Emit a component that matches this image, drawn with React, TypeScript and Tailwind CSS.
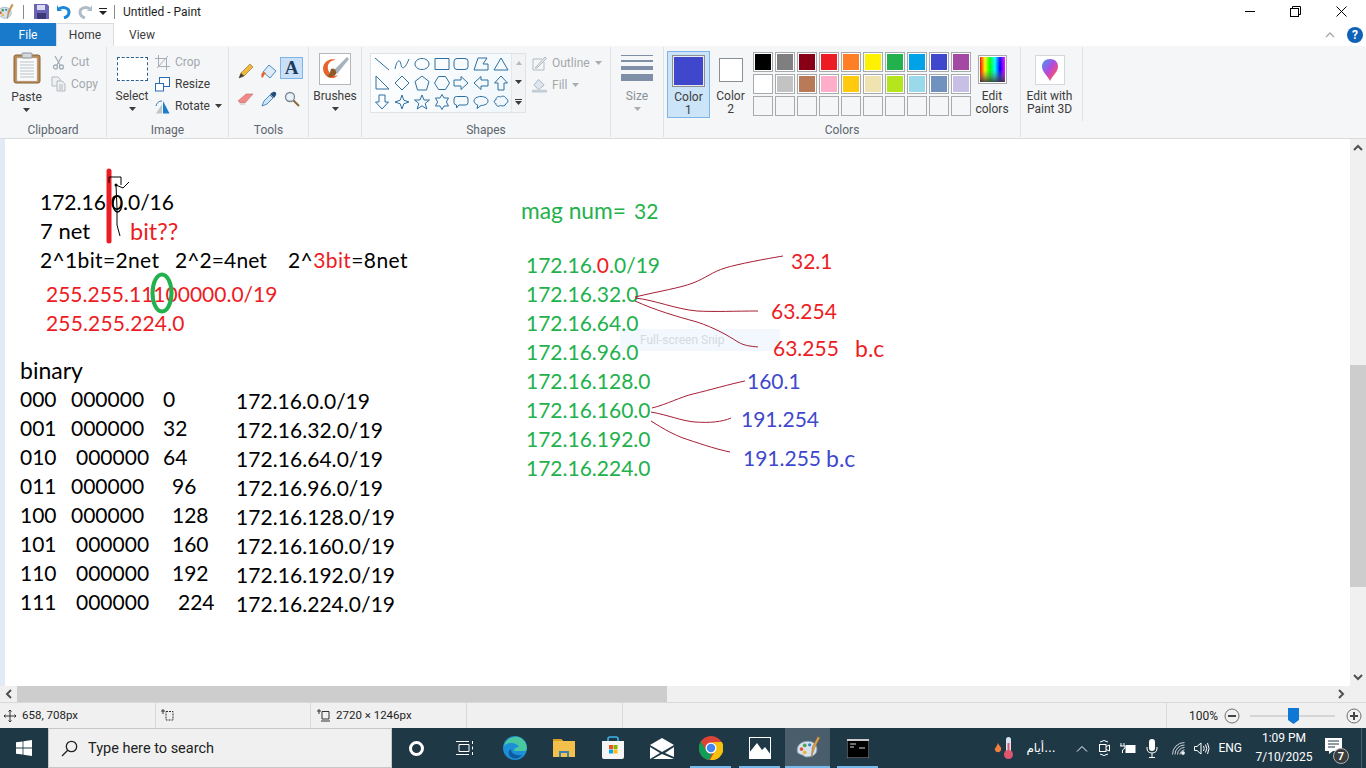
import React from 'react';

const RED = 'text-[#ed1c24]';
const GREEN = 'text-[#22b14c]';
const BLUE = 'text-[#3f48cc]';

// --- text typed on the paint canvas (page x - 5, page y - 139) ---
const canvasText: { cls: string; text: React.ReactNode }[] = [
  { cls: 'left-[35px] top-[49px]', text: '172.16.0.0/16' },
  { cls: 'left-[35px] top-[78px] text-[22px]', text: '7 net' },
  { cls: `left-[125px] top-[78px] text-[23.500px] ${RED}`, text: 'bit??' },
  { cls: 'left-[35px] top-[107px] tracking-[0.35px]', text: '2^1bit=2net' },
  { cls: 'left-[170px] top-[107px] tracking-[0.1px]', text: '2^2=4net' },
  { cls: 'left-[283px] top-[107px] tracking-[0.4px]', text: <>2^<span className={RED}>3bit</span>=8net</> },
  { cls: `left-[41px] top-[141px] ${RED}`, text: '255.255.11100000.0/19' },
  { cls: `left-[41px] top-[170px] tracking-[0.15px] ${RED}`, text: '255.255.224.0' },
  { cls: 'left-[15px] top-[217px] text-[23px]', text: 'binary' },

  { cls: 'left-[15px] top-[246px]', text: '000' },
  { cls: 'left-[66px] top-[246px]', text: '000000' },
  { cls: 'left-[158px] top-[246px]', text: '0' },
  { cls: 'left-[15px] top-[275px]', text: '001' },
  { cls: 'left-[66px] top-[275px]', text: '000000' },
  { cls: 'left-[158px] top-[275px]', text: '32' },
  { cls: 'left-[15px] top-[304px]', text: '010' },
  { cls: 'left-[71px] top-[304px]', text: '000000' },
  { cls: 'left-[158px] top-[304px]', text: '64' },
  { cls: 'left-[15px] top-[333px]', text: '011' },
  { cls: 'left-[66px] top-[333px]', text: '000000' },
  { cls: 'left-[167px] top-[333px]', text: '96' },
  { cls: 'left-[15px] top-[362px]', text: '100' },
  { cls: 'left-[66px] top-[362px]', text: '000000' },
  { cls: 'left-[167px] top-[362px]', text: '128' },
  { cls: 'left-[15px] top-[391px]', text: '101' },
  { cls: 'left-[71px] top-[391px]', text: '000000' },
  { cls: 'left-[167px] top-[391px]', text: '160' },
  { cls: 'left-[15px] top-[420px]', text: '110' },
  { cls: 'left-[71px] top-[420px]', text: '000000' },
  { cls: 'left-[167px] top-[420px]', text: '192' },
  { cls: 'left-[15px] top-[449px]', text: '111' },
  { cls: 'left-[71px] top-[449px]', text: '000000' },
  { cls: 'left-[173px] top-[449px]', text: '224' },

  { cls: 'left-[231px] top-[248px]', text: '172.16.0.0/19' },
  { cls: 'left-[231px] top-[277px] tracking-[0.05px]', text: '172.16.32.0/19' },
  { cls: 'left-[231px] top-[306px] tracking-[0.05px]', text: '172.16.64.0/19' },
  { cls: 'left-[231px] top-[335px] tracking-[0.05px]', text: '172.16.96.0/19' },
  { cls: 'left-[231px] top-[364px] tracking-[0.05px]', text: '172.16.128.0/19' },
  { cls: 'left-[231px] top-[393px] tracking-[0.05px]', text: '172.16.160.0/19' },
  { cls: 'left-[231px] top-[422px] tracking-[0.05px]', text: '172.16.192.0/19' },
  { cls: 'left-[231px] top-[451px] tracking-[0.05px]', text: '172.16.224.0/19' },

  { cls: `left-[516px] top-[58px] text-[22.750px] ${GREEN}`, text: 'mag num=' },
  { cls: `left-[629px] top-[58px] ${GREEN}`, text: '32' },
  { cls: `left-[521px] top-[112px] ${GREEN}`, text: <>172.16.<span className={RED}>0</span>.0/19</> },
  { cls: `left-[521px] top-[141px] ${GREEN}`, text: '172.16.32.0' },
  { cls: `left-[521px] top-[170px] ${GREEN}`, text: '172.16.64.0' },
  { cls: `left-[521px] top-[199px] ${GREEN}`, text: '172.16.96.0' },
  { cls: `left-[521px] top-[228px] ${GREEN}`, text: '172.16.128.0' },
  { cls: `left-[521px] top-[257px] ${GREEN}`, text: '172.16.160.0' },
  { cls: `left-[521px] top-[286px] ${GREEN}`, text: '172.16.192.0' },
  { cls: `left-[521px] top-[315px] ${GREEN}`, text: '172.16.224.0' },

  { cls: `left-[786px] top-[108px] ${RED}`, text: '32.1' },
  { cls: `left-[766px] top-[158px] ${RED}`, text: '63.254' },
  { cls: `left-[768px] top-[195px] ${RED}`, text: '63.255' },
  { cls: `left-[850px] top-[195px] text-[23px] ${RED}`, text: 'b.c' },
  { cls: `left-[742px] top-[228px] ${BLUE}`, text: '160.1' },
  { cls: `left-[736px] top-[266px] ${BLUE}`, text: '191.254' },
  { cls: `left-[738px] top-[305px] ${BLUE}`, text: '191.255' },
  { cls: `left-[821px] top-[305px] text-[23px] ${BLUE}`, text: 'b.c' },
];

const swatchRow1 = ['bg-[#000000]', 'bg-[#7f7f7f]', 'bg-[#880015]', 'bg-[#ed1c24]', 'bg-[#ff7f27]', 'bg-[#fff200]', 'bg-[#22b14c]', 'bg-[#00a2e8]', 'bg-[#3f48cc]', 'bg-[#a349a4]'];
const swatchRow2 = ['bg-[#ffffff]', 'bg-[#c3c3c3]', 'bg-[#b97a57]', 'bg-[#ffaec9]', 'bg-[#ffc90e]', 'bg-[#efe4b0]', 'bg-[#b5e61d]', 'bg-[#99d9ea]', 'bg-[#7092be]', 'bg-[#c8bfe7]'];
const swatchRow3 = Array.from({ length: 10 }, () => 'bg-[#f5f6f7]');

const shapePaths = [
  'M1 2L15 14',
  'M1 13C3 3 6 3 7 8.5S11 13 15 3',
  'M8 2.5C12 2.5 15 5 15 8s-3 5.5-7 5.5S1 11 1 8s3-5.5 7-5.5Z',
  'M1 2.5H15V13.5H1Z',
  'M4 2.5H12Q15 2.5 15 5.5V10.5Q15 13.5 12 13.5H4Q1 13.5 1 10.5V5.5Q1 2.5 4 2.5Z',
  'M1 14L5 2H14L10 8H15V14Z',
  'M8 2L15 14H1Z',
  'M2 1L15 14H2Z',
  'M8 1L15 8L8 15L1 8Z',
  'M8 1L15 6.5L12.5 15H3.5L1 6.5Z',
  'M4.5 1.5H11.5L15.5 8L11.5 14.5H4.5L.5 8Z',
  'M1 5H8V1.5L15 8L8 14.5V11H1Z',
  'M15 5H8V1.5L1 8L8 14.5V11H15Z',
  'M8 1L14.5 8H11V15H5V8H1.5Z',
  'M8 15L14.5 8H11V1H5V8H1.5Z',
  'M8 1L9.8 6.2L15 8L9.8 9.8L8 15L6.2 9.8L1 8L6.2 6.2Z',
  'M8 1L10 6H15.5L11.2 9.4L12.8 15L8 11.8L3.2 15L4.8 9.4L.5 6H6Z',
  'M8 .5L10 4H14.5L12.4 8L14.5 12H10L8 15.5L6 12H1.5L3.6 8L1.5 4H6Z',
  'M3.5 2.5H12.5Q15 2.5 15 5V8.5Q15 11 12.5 11H6L3.5 14V11Q1 11 1 8.5V5Q1 2.5 3.5 2.5Z',
  'M8 2.5C12 2.5 15 4.5 15 7s-3 4.5-7 4.5L4 14.5L4.8 11C2.5 10.300 1 8.800 1 7C1 4.500 4 2.500 8 2.500Z',
  'M3 6C2.500 3.500 5.500 1.500 7.500 3C9 1.500 12.500 2 13 4.500C15.500 5 15.500 9 13 9.500C12.500 12 9 12.500 7.500 11.500C5.500 13 2.500 12 3 9.500C.5 9 .5 6 3 6Z',
];

const Caret = ({ light }: { light?: boolean }) => (
  <svg width="7" height="4" viewBox="0 0 7 4" className="shrink-0">
    <path d="M0 0H7L3.500 4Z" fill={light ? '#a9adb2' : '#3c3c3c'} />
  </svg>
);

const PaletteIcon = ({ size }: { size: number }) => (
  <svg width={size} height={size} viewBox="0 0 24 24">
    <path d="M2 14C2 8 8 5 14 6C19 7 21 11 20 15C19 19 14 21 9 20C7 17 2 19 2 14Z" fill="#d6e3ef" stroke="#7f9bb5" strokeWidth=".8" />
    <circle cx="6" cy="13" r="1.700" fill="#e2563c" />
    <circle cx="9" cy="9.500" r="1.700" fill="#4ca64c" />
    <circle cx="13.500" cy="9" r="1.500" fill="#3f7fd0" />
    <circle cx="9" cy="16" r="1.700" fill="#e5b73b" />
    <path d="M15 21L16 11L21 1.500L23 2.500L18 12Z" fill="#d9a04f" stroke="#9a6a2a" strokeWidth=".5" />
  </svg>
);

const GroupLabel = ({ children }: { children: React.ReactNode }) => (
  <div className="h-[18px] pt-[1px] text-center text-[12px] leading-[16px] text-[#5c6670]">{children}</div>
);

const SmallAction = ({ icon, label, muted, caret }: { icon: React.ReactNode; label: string; muted?: boolean; caret?: boolean }) => (
  <div className={`flex h-[22px] items-center gap-[5px] text-[12px] ${muted ? 'text-[#a4a8ad]' : 'text-[#3c3c3c]'}`}>
    <span className="flex w-[15px] justify-center">{icon}</span>
    <span>{label}</span>
    {caret && <Caret light={muted} />}
  </div>
);

const RibbonGroup = ({ w, label, children }: { w: string; label: string; children: React.ReactNode }) => (
  <div className={`flex h-full shrink-0 flex-col border-r border-[#dfe1e3] ${w}`}>
    <div className="h-[74px] shrink-0">{children}</div>
    <GroupLabel>{label}</GroupLabel>
  </div>
);

const Ribbon = () => (
  <div className="flex h-[93px] shrink-0 border-b border-[#dadbdc] bg-[#f5f6f7] pb-[1px] pt-[1px]">
    <RibbonGroup w="w-[107px]" label="Clipboard">
      <div className="flex pl-[8px] pt-[5px]">
        <div className="flex w-[37px] flex-col items-center">
          <svg width="28" height="32" viewBox="0 0 28 32">
            <rect x="1" y="3" width="26" height="28" rx="2" fill="#b98a56" stroke="#8a6236" />
            <rect x="4" y="6" width="20" height="23" fill="#fafafa" stroke="#c9c9c9" strokeWidth=".5" />
            <path d="M7 10H21M7 13H21M7 16H21M7 19H21M7 22H21M7 25H21" stroke="#b9c3cc" />
            <rect x="9" y="1" width="10" height="5" rx="1" fill="#d4d8dc" stroke="#8d9298" />
          </svg>
          <span className="mt-[5px] text-[12px] leading-[16px] text-[#3c3c3c]">Paste</span>
          <span className="mt-[3px]"><Caret /></span>
        </div>
        <div className="ml-[6px] mt-[-1px]">
          <SmallAction muted label="Cut" icon={
            <svg width="13" height="15" viewBox="0 0 13 15" fill="none" stroke="#a3adb8" strokeWidth="1.300"><path d="M3 1L8 10M10 1L5 10" /><circle cx="3.500" cy="12" r="2" /><circle cx="9.500" cy="12" r="2" /></svg>
          } />
          <SmallAction muted label="Copy" icon={
            <svg width="15" height="16" viewBox="0 0 15 16" fill="#eef0f2" stroke="#b3bac1"><path d="M1 1H7L9 3V10H1Z" /><path d="M6 5H11L14 8V15H6Z" /><path d="M8 9H12M8 11H12M8 13H12" /></svg>
          } />
        </div>
      </div>
    </RibbonGroup>
    <RibbonGroup w="w-[122px]" label="Image">
      <div className="flex pl-[9px] pt-[10px]">
        <div className="flex w-[32px] flex-col items-center">
          <div className="h-[24px] w-[31px] border border-dashed border-[#2b5f8f] bg-white" />
          <span className="mt-[7px] text-[12px] leading-[16px] text-[#3c3c3c]">Select</span>
          <span className="mt-[3px]"><Caret /></span>
        </div>
        <div className="ml-[7px] mt-[-6px]">
          <SmallAction muted label="Crop" icon={
            <svg width="15" height="15" viewBox="0 0 15 15" fill="none" stroke="#a3adb8"><path d="M3.500 0V11.500H15M0 3.500H11.500V15M13 1L2 13" /></svg>
          } />
          <SmallAction label="Resize" icon={
            <svg width="15" height="15" viewBox="0 0 15 15" fill="#fff" stroke="#2b6cb0"><rect x="4.500" y=".5" width="10" height="9" /><rect x=".5" y="6.500" width="8" height="7.500" /></svg>
          } />
          <SmallAction label="Rotate" caret icon={
            <svg width="15" height="15" viewBox="0 0 15 15"><path d="M8 2L14.500 14.500H8Z" fill="#1c7ecb" /><path d="M7 5V14.500H1Z" fill="#c2c6ca" /><path d="M1 7C2 3 5 2 7 2" fill="none" stroke="#2b6cb0" /></svg>
          } />
        </div>
      </div>
    </RibbonGroup>
    <RibbonGroup w="w-[80px]" label="Tools">
      <div className="grid grid-cols-[23px_23px_23px] grid-rows-[28px_28px] justify-center pt-[10px]">
        <span className="flex items-center justify-center">
          <svg width="16" height="16" viewBox="0 0 16 16"><path d="M1 15L3 10L12 1L15 4L6 13Z" fill="#f0b73c" stroke="#8a6a2a" strokeWidth=".6" /><path d="M1 15L3 10L6 13Z" fill="#3c3c3c" /></svg>
        </span>
        <span className="flex items-center justify-center">
          <svg width="18" height="17" viewBox="0 0 18 17"><path d="M9 2L16 8L10 15L3 9Z" fill="#dcebf7" stroke="#4b8cc0" /><path d="M4 9C1 9 1 13 2 15C4 14 4 11 6 10Z" fill="#e8622c" /></svg>
        </span>
        <span className="flex h-[22px] items-center justify-center border border-[#7eb4ea] bg-[#c9e0f7] font-['Liberation_Serif',serif] text-[19px] font-bold text-[#1e3a5f]">A</span>
        <span className="flex items-center justify-center">
          <svg width="17" height="15" viewBox="0 0 17 15"><path d="M1 9L9 2H16L8 11H3Z" fill="#f08a8a" stroke="#c66" strokeWidth=".6" /><path d="M1 9L3 13H8V11H3Z" fill="#d9d9d9" /></svg>
        </span>
        <span className="flex items-center justify-center">
          <svg width="16" height="16" viewBox="0 0 16 16"><path d="M1 15L3 10L9 4L12 7L6 13Z" fill="#cfe6f7" stroke="#2b6cb0" strokeWidth=".8" /><path d="M9 3L12 1C14 0 16 2 15 4L13 7Z" fill="#1f4f7a" /></svg>
        </span>
        <span className="flex items-center justify-center">
          <svg width="16" height="16" viewBox="0 0 16 16" fill="none"><circle cx="6" cy="6" r="4.500" fill="#e8f1f8" stroke="#7a8794" strokeWidth="1.300" /><path d="M9.500 9.500L15 15" stroke="#8a6a3c" strokeWidth="2" /></svg>
        </span>
      </div>
    </RibbonGroup>
    <RibbonGroup w="w-[53px]" label="">
      <div className="flex flex-col items-center pt-[6px]">
        <div className="h-[32px] w-[32px] border border-[#b4b8bc] bg-white">
          <svg width="30" height="30" viewBox="0 0 30 30"><path d="M3 14C4 6 12 4 16 6C10 6 7 10 8 15C9 20 14 23 18 21C14 27 3 24 3 14Z" fill="#e8622c" /><path d="M13 17L27 3L29 5L17 20Z" fill="#a8b2bc" /><path d="M11 15C14 13 17 17 16 20C14 23 9 24 7 22C10 21 10 18 11 15Z" fill="#8d5a2b" /></svg>
        </div>
        <span className="mt-[3px] text-[12px] leading-[16px] text-[#3c3c3c]">Brushes</span>
        <span className="mt-[3px]"><Caret /></span>
      </div>
    </RibbonGroup>
    <RibbonGroup w="w-[249px]" label="Shapes">
      <div className="flex pl-[8px] pt-[6px]">
        <div className="flex h-[60px] w-[156px] border border-[#dfe3e8] bg-[linear-gradient(135deg,#ffffff,#eef6fb)]">
          <div className="grid h-full w-[141px] grid-cols-7 grid-rows-3 pl-[1px]">
            {shapePaths.map((d, i) => (
              <span key={i} className="flex items-center justify-center">
                <svg width="16" height="16" viewBox="0 0 16 16" fill="none" stroke="#2f6f9f" strokeWidth="1"><path d={d} /></svg>
              </span>
            ))}
          </div>
          <div className="flex w-[14px] flex-col items-center justify-around border-l border-[#e4e6e9] bg-[#f2f3f4]">
            <svg width="6" height="4" viewBox="0 0 6 4"><path d="M0 4H6L3 0Z" fill="#b5b8bb" /></svg>
            <Caret />
            <svg width="7" height="6" viewBox="0 0 7 6"><path d="M0 0H7V1H0ZM0 2H7L3.500 6Z" fill="#3c3c3c" /></svg>
          </div>
        </div>
        <div className="ml-[6px] mt-[-1px]">
          <SmallAction muted caret label="Outline" icon={
            <svg width="15" height="15" viewBox="0 0 15 15" fill="none" stroke="#b3bac1"><path d="M1 3H10M1 3V14H12V6" /><path d="M3 12L13 1L14.500 2.500L5 12Z" fill="#e4e7ea" /></svg>
          } />
          <SmallAction muted caret label="Fill" icon={
            <svg width="16" height="15" viewBox="0 0 16 15"><path d="M7 1L13 7L7 12L2 7Z" fill="#dde6ee" stroke="#a9b5c0" /><path d="M0 12H16V15H0Z" fill="#c3cdd6" /></svg>
          } />
        </div>
      </div>
    </RibbonGroup>
    <RibbonGroup w="w-[53px]" label="">
      <div className="flex flex-col items-center pt-[8px]">
        <div className="flex w-[32px] flex-col gap-[4px]">
          <div className="h-[1px] bg-[#7f8fa8]" />
          <div className="h-[2px] bg-[#7f8fa8]" />
          <div className="h-[4px] bg-[#7f8fa8]" />
          <div className="h-[7px] bg-[#7f8fa8]" />
        </div>
        <span className="mt-[7px] text-[12px] leading-[16px] text-[#8a8f94]">Size</span>
        <span className="mt-[3px]"><Caret light /></span>
      </div>
    </RibbonGroup>
    <RibbonGroup w="w-[357px]" label="Colors">
      <div className="flex pl-[3px] pt-[4px]">
        <div className="flex h-[67px] w-[43px] flex-col items-center border border-[#7eb4ea] bg-[#cce4f7] pt-[3px]">
          <div className="h-[32px] w-[33px] border border-[#8c8f92] bg-[#3f48cc] shadow-[inset_0_0_0_1px_#e8ecf0]" />
          <span className="mt-[4px] text-center text-[12px] leading-[13px] text-[#3c3c3c]">Color<br />1</span>
        </div>
        <div className="ml-[8px] flex w-[25px] flex-col items-center pt-[7px]">
          <div className="h-[24px] w-[24px] border border-[#8c8f92] bg-white" />
          <span className="mt-[8px] text-center text-[12px] leading-[13px] text-[#3c3c3c]">Color<br />2</span>
        </div>
        <div className="ml-[9px] flex flex-col">
          {[swatchRow1, swatchRow2, swatchRow3].map((row, r) => (
            <div key={r} className="flex">
              {row.map((c, i) => (
                <span key={i} className="h-[22px] w-[22px] p-[1px]">
                  <span className={`block h-full w-full border border-[#a8abae] ${r === 2 ? '' : 'shadow-[inset_0_0_0_1px_#ffffff]'} ${c}`} />
                </span>
              ))}
            </div>
          ))}
        </div>
        <div className="ml-[2px] flex w-[36px] flex-col items-center pt-[4px]">
          <div className="h-[29px] w-[29px] border border-[#a8abae] bg-white p-[1px]">
            <svg width="25" height="25" viewBox="0 0 25 25">
              <defs>
                <linearGradient id="rainbow"><stop offset="0" stopColor="#f00" /><stop offset=".2" stopColor="#ff0" /><stop offset=".4" stopColor="#0f0" /><stop offset=".6" stopColor="#0ff" /><stop offset=".8" stopColor="#00f" /><stop offset="1" stopColor="#f0f" /></linearGradient>
                <linearGradient id="shade" x2="0" y2="1"><stop offset="0" stopColor="#fff" stopOpacity=".1" /><stop offset=".5" stopColor="#808080" stopOpacity="0" /><stop offset="1" stopColor="#3a3a3a" stopOpacity=".9" /></linearGradient>
              </defs>
              <rect width="25" height="25" fill="url(#rainbow)" />
              <rect width="25" height="25" fill="url(#shade)" />
            </svg>
          </div>
          <span className="mt-[6px] text-center text-[12px] leading-[13px] text-[#3c3c3c]">Edit<br />colors</span>
        </div>
      </div>
    </RibbonGroup>
    <div className="flex h-[74px] w-[62px] shrink-0 flex-col items-center border-r border-[#dfe1e3] pr-[4px] pt-[8px]">
      <div className="flex h-[30px] w-[30px] items-center justify-center border border-[#d5d8db] bg-white">
        <svg width="18" height="24" viewBox="0 0 18 24">
          <defs>
            <linearGradient id="drop" x1="0" y1="0" x2="1" y2="1"><stop offset="0" stopColor="#3aa0f0" /><stop offset=".45" stopColor="#b04be0" /><stop offset=".75" stopColor="#f0507a" /><stop offset="1" stopColor="#f5c040" /></linearGradient>
          </defs>
          <path d="M9 1C14 1 17 4 17 8.500C17 14 11 18 9 23C7 18 1 14 1 8.500C1 4 4 1 9 1Z" fill="url(#drop)" />
        </svg>
      </div>
      <span className="mt-[5px] text-center text-[12px] leading-[13px] text-[#3c3c3c]">Edit with<br />Paint 3D</span>
    </div>
  </div>
);

const CanvasArea = () => (
  <div className="flex min-h-0 flex-1">
    <div className="w-[5px] shrink-0 bg-[#e1eaf5]" />
    <div className="relative flex-1 overflow-hidden bg-white font-['Lato',sans-serif] text-[21px] leading-[28px] text-black">
      <div className="absolute left-[615px] top-[190px] h-[22px] w-[160px] bg-[#f2f8fd] pl-[20px] font-['Roboto',sans-serif] text-[12px] leading-[22px] text-[#d6dade]">Full-screen Snip</div>
      {canvasText.map((t, i) => (
        <span key={i} className={`absolute whitespace-nowrap ${t.cls}`}>{t.text}</span>
      ))}
      <svg className="absolute left-0 top-0" width="1345" height="547" viewBox="5 139 1345 547" fill="none">
        <path d="M109 171V241" stroke="#ed1c24" strokeWidth="5" strokeLinecap="round" />
        <ellipse cx="162" cy="293" rx="9.500" ry="18.500" stroke="#22b14c" strokeWidth="4" />
        <ellipse cx="117.500" cy="204" rx="4.500" ry="8" stroke="#000" strokeWidth="1.300" />
        <path d="M109 183V177H121V185M129 182L123 188L116 185M116 185L117 208L117 225L120 236" stroke="#000" strokeWidth="1" />
        <circle cx="116" cy="185" r="1.500" fill="#000" />
        <g stroke="#a61e35" strokeWidth="1">
          <path d="M635 297C660 291 680 288 693 283S712 272 725 268S765 259 783 256" />
          <path d="M635 298C655 300 675 309 697 311C715 312 735 311 758 311" />
          <path d="M635 301C655 310 675 316 697 322C715 328 727 335 738 342C745 346 750 346 758 347" />
          <path d="M652 408C668 404 680 397 693 394C710 390 730 384 745 381" />
          <path d="M651 412C668 415 682 421 695 422C710 423 722 422 731 418" />
          <path d="M651 421C665 430 675 435 683 438C695 442 715 449 730 452" />
        </g>
      </svg>
    </div>
    <div className="flex w-[16px] shrink-0 flex-col items-center bg-[#f0f0f0]">
      <span className="flex h-[17px] w-full shrink-0 items-center justify-center">
        <svg width="10" height="7" viewBox="0 0 10 7" fill="none" stroke="#505050" strokeWidth="2"><path d="M1 6L5 2L9 6" /></svg>
      </span>
      <div className="mt-[209px] h-[222px] w-full bg-[#cdcdcd]" />
      <span className="mt-auto flex h-[17px] w-full shrink-0 items-center justify-center">
        <svg width="10" height="7" viewBox="0 0 10 7" fill="none" stroke="#505050" strokeWidth="2"><path d="M1 1L5 5L9 1" /></svg>
      </span>
    </div>
  </div>
);

const HScroll = () => (
  <div className="flex h-[17px] shrink-0 items-stretch border-b border-[#d9d9d9] bg-[#f0f0f0]">
    <span className="flex w-[17px] items-center justify-center">
      <svg width="7" height="10" viewBox="0 0 7 10" fill="none" stroke="#505050" strokeWidth="2"><path d="M6 1L2 5L6 9" /></svg>
    </span>
    <div className="h-[16px] w-[650px] bg-[#cdcdcd]" />
    <span className="ml-auto mr-[16px] flex w-[17px] items-center justify-center">
      <svg width="7" height="10" viewBox="0 0 7 10" fill="none" stroke="#505050" strokeWidth="2"><path d="M1 1L5 5L1 9" /></svg>
    </span>
  </div>
);

const StatusBar = () => (
  <div className="flex h-[25px] shrink-0 items-center bg-[#f0f0f0] text-[11.500px] text-[#1e1e1e]">
    <div className="flex h-full w-[156px] items-center gap-[6px] border-r border-[#d9d9d9] pl-[4px]">
      <svg width="12" height="12" viewBox="0 0 12 12" fill="none" stroke="#333"><path d="M6 0V12M0 6H12M4.500 1.500L6 0L7.500 1.500M4.500 10.500L6 12L7.500 10.500M1.500 4.500L0 6L1.500 7.500M10.500 4.500L12 6L10.500 7.500" /></svg>
      <span>658, 708px</span>
    </div>
    <div className="flex h-full w-[155px] items-center border-r border-[#d9d9d9] pl-[5px]">
      <svg width="13" height="13" viewBox="0 0 13 13" fill="none" stroke="#333"><path d="M2 0V5M0 2H4" /><path d="M5 2.500H12V11H5Z" strokeDasharray="2 1" /></svg>
    </div>
    <div className="flex h-full w-[156px] items-center gap-[6px] border-r border-[#d9d9d9] pl-[6px]">
      <svg width="13" height="13" viewBox="0 0 13 13" fill="none" stroke="#333"><path d="M2 0V5M0 2H4" /><path d="M5 2.500H12V10H5Z" /><path d="M4 12H13" /></svg>
      <span className="whitespace-nowrap">2720 × 1246px</span>
    </div>
    <div className="h-full w-[156px] border-r border-[#d9d9d9]" />
    <div className="ml-[543px] flex h-full flex-1 items-center border-l border-[#d9d9d9] pl-[22px] text-[12px]">
      <span>100%</span>
      <svg className="ml-[6px]" width="16" height="16" viewBox="0 0 16 16" fill="none" stroke="#6f6f6f"><circle cx="8" cy="8" r="7" /><path d="M4 8H12" strokeWidth="2" stroke="#444" /></svg>
      <div className="relative ml-[10px] h-[2px] w-[85px] bg-[#d5d5d5]">
        <svg className="absolute left-[38px] top-[-7px]" width="11" height="16" viewBox="0 0 11 16"><path d="M0 0H11V12L5.500 16L0 12Z" fill="#0f78d4" /></svg>
      </div>
      <svg className="ml-[11px]" width="16" height="16" viewBox="0 0 16 16" fill="none" stroke="#6f6f6f"><circle cx="8" cy="8" r="7" /><path d="M4 8H12M8 4V12" strokeWidth="2" stroke="#444" /></svg>
    </div>
  </div>
);

const TaskButton = ({ children, running }: { children: React.ReactNode; running?: boolean }) => (
  <div className="relative flex h-full w-[49px] shrink-0 items-center justify-center">
    {children}
    {running && <div className="absolute bottom-0 left-[4px] right-[4px] h-[2px] bg-[#76b9ed]" />}
  </div>
);

const Taskbar = () => (
  <div className="flex h-[40px] shrink-0 items-center bg-[#1f3846] text-white">
    <div className="flex h-full w-[48px] items-center justify-center">
      <svg width="16" height="16" viewBox="0 0 16 16" fill="#fff"><path d="M0 2.300L6.600 1.400V7.600H0ZM7.400 1.300L16 0V7.600H7.400ZM0 8.400H6.600V14.600L0 13.700ZM7.400 8.400H16V16L7.400 14.700Z" /></svg>
    </div>
    <div className="flex h-full w-[344px] items-center border border-[#c8c8c8] bg-[#f0f0f0] pl-[12px] pt-[1px] text-[14.500px] text-[#222]">
      <svg width="17" height="17" viewBox="0 0 17 17" fill="none" stroke="#222" strokeWidth="1.300"><circle cx="10.500" cy="6.500" r="5.200" /><path d="M6.700 10.300L1 16" /></svg>
      <span className="ml-[10px]">Type here to search</span>
    </div>
    <TaskButton>
      <span className="block h-[15px] w-[15px] rounded-full border-[3px] border-white" />
    </TaskButton>
    <TaskButton>
      <svg width="19" height="16" viewBox="0 0 19 16" fill="none" stroke="#fff"><path d="M0 1.500H13M0 14.500H13M3 4.500H13V11.500H3ZM16.500 1V4M16.500 6.500V9.500M16.500 12V15" /></svg>
    </TaskButton>
    <TaskButton>
      <svg width="24" height="24" viewBox="0 0 24 24">
        <circle cx="12" cy="12" r="12" fill="#1b8fd8" />
        <path d="M1 10C3 2 12 -1 18 2C23 5 25 11 23 15H11C11 12 14 11 16 11C14 7 6 5 1 10Z" fill="#49c8a0" />
        <path d="M8 13C8 18 13 20 19 19C16 23 9 24 6 19C5 16 6 14 8 13Z" fill="#0f5a9c" />
      </svg>
    </TaskButton>
    <TaskButton>
      <svg width="24" height="20" viewBox="0 0 24 20">
        <path d="M1 1H9L11 3H23V19H1Z" fill="#f3c14b" />
        <path d="M1 1H9L11 3H1Z" fill="#d99f22" />
        <path d="M7 13H17V19H15V15H9V19H7Z" fill="#3b7fb5" />
      </svg>
    </TaskButton>
    <TaskButton>
      <svg width="24" height="24" viewBox="0 0 24 24">
        <path d="M7 6V3Q7 1 9 1H15Q17 1 17 3V6" fill="none" stroke="#3db2e8" strokeWidth="1.600" />
        <path d="M1 5H23V21Q23 23 21 23H3Q1 23 1 21Z" fill="#f5f5f5" />
        <rect x="8" y="9" width="4" height="4" fill="#f25022" /><rect x="12.500" y="9" width="4" height="4" fill="#7fba00" />
        <rect x="8" y="13.500" width="4" height="4" fill="#00a4ef" /><rect x="12.500" y="13.500" width="4" height="4" fill="#ffb900" />
      </svg>
    </TaskButton>
    <TaskButton>
      <svg width="24" height="21" viewBox="0 0 24 21" fill="#fff"><path d="M0 7L12 0L24 7L12 14Z" /><path d="M0 9L10 15L0 21ZM24 21H3L12 16L24 21Z" /><path d="M24 9V19L15 15Z" /></svg>
    </TaskButton>
    <TaskButton running>
      <svg width="24" height="24" viewBox="0 0 24 24">
        <circle cx="12" cy="12" r="12" fill="#db4437" />
        <path d="M12 6H22.800A12 12 0 0 1 11 24L16.500 14A5.500 5.500 0 0 0 12 6Z" fill="#f4c20d" />
        <path d="M1.900 5.500L7 14A5.500 5.500 0 0 0 13 17.500L10 24A12 12 0 0 1 1.900 5.500Z" fill="#0f9d58" />
        <circle cx="12" cy="12" r="5.500" fill="#fff" /><circle cx="12" cy="12" r="4.200" fill="#4285f4" />
      </svg>
    </TaskButton>
    <TaskButton running>
      <svg width="22" height="22" viewBox="0 0 22 22"><rect width="22" height="22" fill="#fff" /><rect x="1" y="1" width="20" height="20" fill="#1f3846" /><path d="M0 22V16L8 6L13 13L16 10L22 18V22Z" fill="#fff" /></svg>
    </TaskButton>
    <div className="relative ml-[1px] mr-[3px] flex h-full w-[45px] shrink-0 items-center justify-center bg-[#4a5d6a]">
      <PaletteIcon size={26} />
      <div className="absolute inset-x-0 bottom-0 h-[2px] bg-[#76b9ed]" />
    </div>
    <TaskButton running>
      <svg width="22" height="19" viewBox="0 0 22 19"><rect width="22" height="19" fill="#000" stroke="#9a9a9a" /><rect x="0" y="0" width="22" height="2" fill="#c8c8c8" /><path d="M3 5H9M3 8H7M12 9H18" stroke="#d8d8d8" /></svg>
    </TaskButton>

    <div className="ml-auto flex h-full items-center">
      <svg width="8" height="10" viewBox="0 0 8 10"><path d="M4 0C5 3 8 4 7 7C6 10 2 10 1 7C.5 5 2 5 4 0Z" fill="#f0803c" /></svg>
      <svg className="ml-[1px]" width="11" height="24" viewBox="0 0 11 24"><rect x="3" y="1" width="5" height="17" rx="2.500" fill="#d8e4ee" /><circle cx="5.500" cy="18.500" r="4.500" fill="#e0566e" /><rect x="4.500" y="7" width="2" height="10" fill="#e0566e" /></svg>
      <span className="ml-[12px] w-[30px] whitespace-nowrap font-['DejaVu_Sans',sans-serif] text-[12px]">أيام...</span>
      <svg className="ml-[20px]" width="12" height="7" viewBox="0 0 12 7" fill="none" stroke="#fff"><path d="M1 6.500L6 1.500L11 6.500" /></svg>
      <svg className="ml-[11px]" width="11" height="18" viewBox="0 0 11 18" fill="none" stroke="#fff"><path d="M1 3Q5 0 9 3M1 15Q5 18 9 15" /><rect x=".5" y="5.500" width="6.500" height="7" /><path d="M7 7.500L10.500 6V12L7 10.500" /></svg>
      <svg className="ml-[10px]" width="16" height="11" viewBox="0 0 16 11"><path d="M1 0V3M4 0V3M0 3H5V5L2.500 7V10" fill="none" stroke="#fff" /><rect x="5.500" y="2" width="10" height="8" fill="#fff" /></svg>
      <svg className="ml-[10px]" width="12" height="19" viewBox="0 0 12 19"><rect x="3" y="0" width="6" height="12" rx="3" fill="#fff" /><path d="M1 8V9Q1 14 6 14Q11 14 11 9V8M6 14V18M3 18.500H9" fill="none" stroke="#fff" /></svg>
      <svg className="ml-[14px]" width="13" height="13" viewBox="0 0 13 13" fill="none" stroke="#c8d0d6"><path d="M.5 12.500A12 12 0 0 1 12.500 .5M3 12.500A9.500 9.500 0 0 1 12.500 3M5.500 12.500A7 7 0 0 1 12.500 5.500M8 12.500A4.500 4.500 0 0 1 12.500 8" /><circle cx="11" cy="11" r="1.500" fill="#fff" /></svg>
      <svg className="ml-[9px]" width="16" height="13" viewBox="0 0 16 13" fill="none" stroke="#fff"><path d="M.5 4.500H3L7 1V12L3 8.500H.5Z" /><path d="M9.500 4Q11 6.500 9.500 9M11.500 2.500Q14 6.500 11.500 10.500M13.500 1Q16.500 6.500 13.500 12" /></svg>
      <span className="ml-[8px] text-[12px]">ENG</span>
      <div className="ml-[15px] flex w-[54px] flex-col items-center text-[12px] leading-[19px]">
        <span>1:09 PM</span>
        <span>7/10/2025</span>
      </div>
      <div className="relative ml-[11px] mr-[7px] h-full w-[32px]">
        <svg className="absolute left-[3px] top-[10px]" width="17" height="17" viewBox="0 0 17 17"><path d="M0 0H17V13H8L4 16V13H0Z" fill="#fff" /><path d="M3 3H14M3 6H14M3 9H10" stroke="#1f3846" /></svg>
        <span className="absolute left-[11px] top-[20px] flex h-[16px] w-[16px] items-center justify-center rounded-full border border-[#aab2b8] bg-[#3c3c3c] text-[11px] font-bold leading-none">7</span>
      </div>
      <div className="mr-[4px] h-full w-px bg-[#4a5d6a]" />
    </div>
  </div>
);

export default function App() {
  return (
    <div className="flex h-[768px] w-[1366px] flex-col overflow-hidden bg-white font-['Roboto',sans-serif] text-black">
      {/* title bar */}
      <div className="flex h-[23px] shrink-0 items-center">
        <div className="ml-[-4px] w-[20px]"><PaletteIcon size={18} /></div>
        <div className="ml-[7px] h-[14px] w-px bg-[#8a8a8a]" />
        <svg className="ml-[10px]" width="15" height="15" viewBox="0 0 15 15"><path d="M0 0H13L15 2V15H0Z" fill="#6b63b5" /><rect x="3" y="1" width="8" height="5" fill="#dcdcf0" /><rect x="3" y="9" width="9" height="6" fill="#3d3a78" /></svg>
        <svg className="ml-[7px]" width="15" height="15" viewBox="0 0 15 15" fill="none"><path d="M4 6L1 1V7H7Z" fill="#1c86d8" /><path d="M3 5C7 2 13 4 13 8C13 11 11 13 8 14" stroke="#1c86d8" strokeWidth="3" /></svg>
        <svg className="ml-[7px]" width="15" height="15" viewBox="0 0 15 15" fill="none"><path d="M11 6L14 1V7H8Z" fill="#aebcc8" /><path d="M12 5C8 2 2 4 2 8C2 11 4 13 7 14" stroke="#aebcc8" strokeWidth="3" /></svg>
        <svg className="ml-[6px]" width="8" height="7" viewBox="0 0 8 7"><path d="M0 0H8V1H0ZM0 3H8L4 7Z" fill="#222" /></svg>
        <div className="ml-[7px] h-[14px] w-px bg-[#8a8a8a]" />
        <span className="ml-[8px] pt-[1px] text-[12px] text-[#1e1e1e]">Untitled - Paint</span>
        <div className="ml-auto flex items-center">
          <div className="h-px w-[10px] bg-black" />
          <svg className="ml-[35px]" width="11" height="11" viewBox="0 0 11 11" fill="none" stroke="#000"><path d="M2.500 2.500V.5H10.500V8.500H8.500" /><rect x=".5" y="2.500" width="8" height="8" /></svg>
          <svg className="ml-[35px] mr-[19px]" width="11" height="11" viewBox="0 0 11 11" fill="none" stroke="#000"><path d="M.5 .5L10.500 10.500M10.500 .5L.5 10.500" /></svg>
        </div>
      </div>
      {/* ribbon tabs */}
      <div className="flex h-[23px] shrink-0 items-stretch text-[12px]">
        <div className="flex w-[56px] items-center justify-center bg-[#1979ca] text-white">File</div>
        <div className="flex w-[58px] items-center justify-center border-x border-t border-[#dadbdc] bg-[#f5f6f7] text-[#3c3c3c]">Home</div>
        <div className="flex w-[56px] items-center justify-center text-[#3c3c3c]">View</div>
        <div className="ml-auto flex items-center">
          <svg width="10" height="6" viewBox="0 0 10 6" fill="none" stroke="#a8a8a8" strokeWidth="1.300"><path d="M1 5L5 1L9 5" /></svg>
          <span className="ml-[12px] mr-[3px] flex h-[16px] w-[16px] items-center justify-center rounded-full bg-[#0f62b8] text-[12px] font-bold text-white">?</span>
        </div>
      </div>
      <Ribbon />
      <CanvasArea />
      <HScroll />
      <StatusBar />
      <Taskbar />
    </div>
  );
}
